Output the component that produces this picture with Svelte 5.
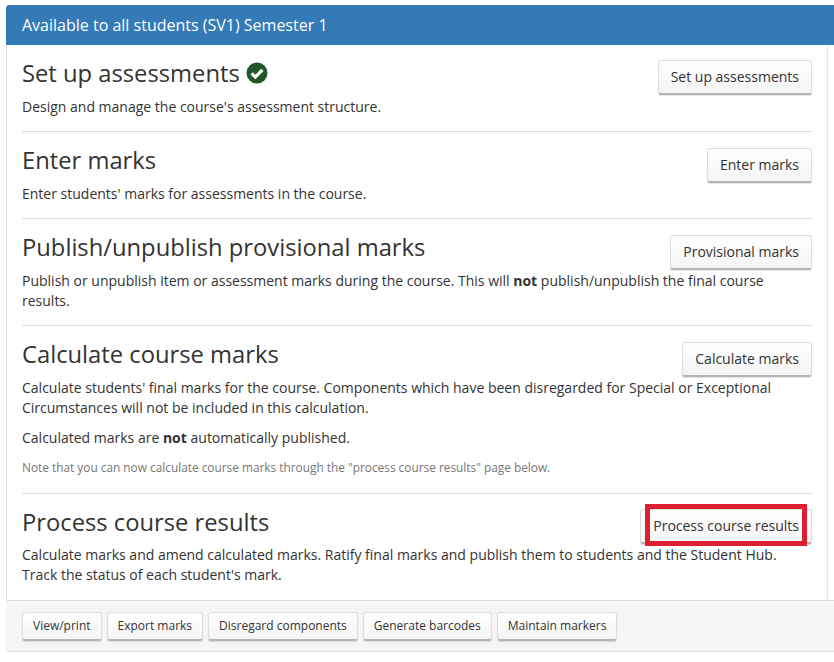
<script lang="ts">
  const footer = ['View/print', 'Export marks', 'Disregard components', 'Generate barcodes', 'Maintain markers'];
</script>

<div class="panel">
  <div class="heading">Available to all students (SV1) Semester 1</div>
  <div class="body">
    <section>
      <button class="btn">Set up assessments</button>
      <h3>Set up assessments
        <svg class="tick" viewBox="0 0 22 22" width="22" height="22" aria-hidden="true">
          <circle cx="11" cy="11" r="10.5" fill="#23562b" />
          <path d="M5.6 11.3 9.4 15 16.4 7.9" fill="none" stroke="#fff" stroke-width="3.2" />
        </svg>
      </h3>
      <p>Design and manage the course's assessment structure.</p>
    </section>
    <section>
      <button class="btn">Enter marks</button>
      <h3>Enter marks</h3>
      <p>Enter students' marks for assessments in the course.</p>
    </section>
    <section>
      <button class="btn">Provisional marks</button>
      <h3>Publish/unpublish provisional marks</h3>
      <p>Publish or unpublish item or assessment marks during the course. This will <b>not</b> publish/unpublish the final course results.</p>
    </section>
    <section>
      <button class="btn">Calculate marks</button>
      <h3>Calculate course marks</h3>
      <p>Calculate students' final marks for the course. Components which have been disregarded for Special or Exceptional Circumstances will not be included in this calculation.</p>
      <p class="gap">Calculated marks are <b>not</b> automatically published.</p>
      <p class="note">Note that you can now calculate course marks through the "process course results" page below.</p>
    </section>
    <section class="last">
      <div class="highlight-wrap">
        <button class="btn">Process course results</button>
        <span class="highlight"></span>
      </div>
      <h3>Process course results</h3>
      <p>Calculate marks and amend calculated marks. Ratify final marks and publish them to students and the Student Hub. Track the status of each student's mark.</p>
    </section>
  </div>
  <div class="footer">
    {#each footer as label}
      <button class="btn small">{label}</button>
    {/each}
  </div>
</div>

<style>
  :global(body) {
    background: #fff;
    font-family: "Open Sans", "Liberation Sans", sans-serif;
    color: #333;
    overflow: hidden;
  }
  .panel {
    margin: 5px 0 0 6px;
  }
  .heading {
    background: #337ab7;
    color: #fff;
    font-size: 16px;
    line-height: 40px;
    height: 40px;
    padding-left: 16px;
    border-radius: 3px 0 0 0;
  }
  .body {
    margin-right: 6px;
    padding: 0 15px;
    border-left: 1px solid #e4e4e4;
    border-right: 1px solid #e4e4e4;
  }
  section {
    padding: 15px 0 14px;
    border-bottom: 1px solid #ddd;
  }
  section + section > .btn {
    margin-top: 1px;
  }
  section.last {
    padding-bottom: 15px;
    border-bottom: 0;
  }
  section.last h3 {
    margin-bottom: 10px;
  }
  h3 {
    font-size: 23.75px;
    font-weight: 400;
    line-height: 26px;
    margin: 0 0 11px;
    display: flex;
    align-items: center;
    gap: 6px;
  }
  p {
    font-size: 14px;
    line-height: 20px;
    margin: 0;
  }
  p.gap {
    margin-top: 10px;
  }
  p.note {
    font-size: 11.85px;
    color: #777;
    margin-top: 9px;
    margin-bottom: 2px;
  }
  .btn {
    float: right;
    font: inherit;
    font-size: 14px;
    line-height: 20px;
    color: #333;
    background: linear-gradient(#fff, #f4f4f4);
    border: 1px solid #ddd;
    border-bottom: 2px solid #b5b5b5;
    border-radius: 3px;
    box-shadow: 0 1px 1px rgba(0, 0, 0, 0.12);
    padding: 6px 12px;
    margin: 0;
  }
  .highlight-wrap {
    float: right;
    position: relative;
  }
  .highlight {
    position: absolute;
    left: 5px;
    right: 5px;
    top: -5px;
    bottom: -2px;
    border: 5px solid #de1f2f;
  }
  .footer {
    background: #f5f5f5;
    border-top: 1px solid #ddd;
    border-bottom: 1px solid #ddd;
    height: 50px;
    padding-left: 16px;
    display: flex;
    align-items: center;
    gap: 5px;
    border-bottom-left-radius: 4px;
  }
  .btn.small {
    float: none;
    font-size: 12px;
    line-height: 18px;
    padding: 4px 10px;
  }
</style>
